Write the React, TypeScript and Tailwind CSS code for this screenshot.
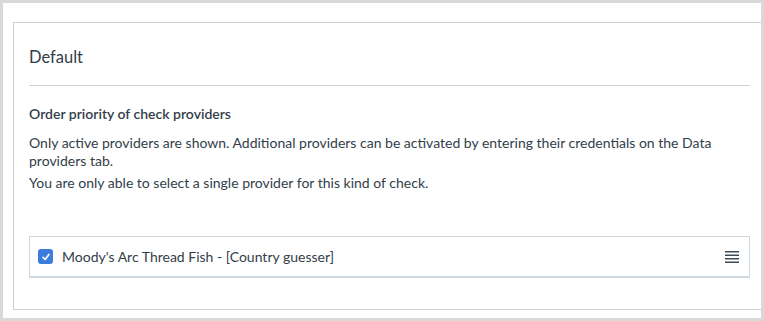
export default function App() {
  return (
    <div className="flex h-[321px] w-[764px] bg-[#d9d9d9] p-[3px] font-['Lato','Liberation_Sans',sans-serif] text-[#323e49]">
      <div className="flex-1 overflow-hidden bg-white pl-[10px] pt-[19px]">
        <div className="h-[288px] border border-r-0 border-[#cfcfcf] pl-[15px] pr-[11px]">
          <h2 className="pt-[22px] text-[16.5px] leading-6">Default</h2>
          <div className="mt-4 border-t border-[#d0d0d0]" />

          <h3 className="mt-[18px] text-[14px] font-semibold leading-5">Order priority of check providers</h3>
          <p className="mt-[10px] text-[14px] leading-[18px]">
            Only active providers are shown. Additional providers can be activated by entering their credentials on the Data
            providers tab.
          </p>
          <p className="mt-[4px] text-[14px] leading-[18px]">
            You are only able to select a single provider for this kind of check.
          </p>

          <div className="mt-[44px] flex h-[42px] items-center border border-b-2 border-[#cfd8de] pl-[8px] pr-[10px]">
            <span className="flex h-[15px] w-[15px] items-center justify-center rounded-[3px] bg-[#3b7ddd]">
              <svg viewBox="0 0 12 12" className="h-[10px] w-[10px]" fill="none" stroke="white" strokeWidth="2" strokeLinecap="round" strokeLinejoin="round">
                <path d="M2.5 6.5 5 9 9.5 3" />
              </svg>
            </span>
            <span className="ml-[9px] text-[14px]">Moody's Arc Thread Fish - [Country guesser]</span>
            <svg viewBox="0 0 14 12" className="ml-auto h-[12px] w-[14px]" fill="#3e4a55">
              <rect x="0" y="0" width="14" height="1.5" />
              <rect x="0" y="3.5" width="14" height="1.5" />
              <rect x="0" y="7" width="14" height="1.5" />
              <rect x="0" y="10.5" width="14" height="1.5" />
            </svg>
          </div>
        </div>
      </div>
    </div>
  );
}
